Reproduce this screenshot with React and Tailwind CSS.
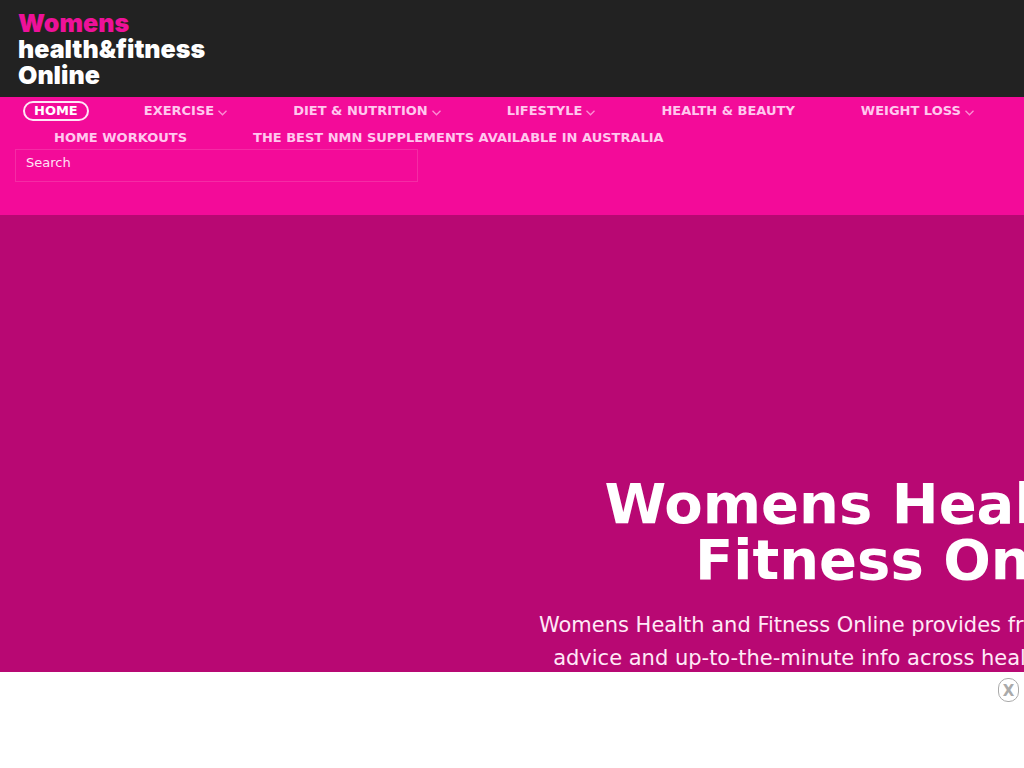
import React from 'react';
import { clsx } from 'clsx';

const menu = [
    { label: 'HOME', active: true },
    { label: 'EXERCISE', dropdown: true },
    { label: 'DIET & NUTRITION', dropdown: true },
    { label: 'LIFESTYLE', dropdown: true },
    { label: 'HEALTH & BEAUTY' },
    { label: 'WEIGHT LOSS', dropdown: true },
    { label: 'HOME WORKOUTS' },
    { label: 'THE BEST NMN SUPPLEMENTS AVAILABLE IN AUSTRALIA' },
];

const Chevron = () => (
    <svg className="mt-[3px] ml-1 h-[6px] w-[9px] opacity-70" viewBox="0 0 9 6" fill="none" stroke="currentColor" strokeWidth="1.3">
        <path d="M0.5 0.8 L4.5 4.8 L8.5 0.8" />
    </svg>
);

const App = () => {
    return (
        <div className="flex h-screen flex-col overflow-hidden font-['DejaVu_Sans',sans-serif]">
            <header>
                <div className="bg-[#222222] px-[18px] pt-[10px] pb-[9px]">
                    <a href="#" className="inline-block align-top font-['Inter',sans-serif] text-[25px] leading-[26px] font-black text-white">
                        <span className="block text-[#ee1199]">Womens</span>
                        <span className="block">health&amp;fitness</span>
                        <span className="block">Online</span>
                    </a>
                </div>

                <div className="bg-[#f30b99] pt-1 pb-[33px]">
                    <nav className="flex flex-wrap gap-x-[66px] gap-y-[7px] pr-4 pl-[54px] text-[13px] leading-5 font-bold text-[#ffc8ee]">
                        {menu.map((item) => (
                            <a
                                key={item.label}
                                href="#"
                                className={clsx(
                                    'flex h-5 items-center whitespace-nowrap',
                                    item.active && '-mr-[11px] -ml-[31px] rounded-full border-2 border-[#ffe6f6] px-[9px] text-white'
                                )}
                            >
                                {item.label}
                                {item.dropdown && <Chevron />}
                            </a>
                        ))}
                    </nav>

                    <form className="mt-px px-[15px]">
                        <input
                            type="search"
                            aria-label="Search"
                            placeholder="Search"
                            className="block h-[33px] w-[403px] max-w-full border border-[#f52ba5] bg-transparent px-[10px] pb-[7px] text-[13px] text-white placeholder:text-[#ffe2f5] placeholder:opacity-100"
                        />
                    </form>
                </div>
            </header>

            <main className="flex-1 overflow-hidden bg-[#b80873] pt-[261px]">
                <div className="ml-[50%] w-[818px] text-center text-white">
                    <h1 className="text-[56px] leading-[56px] font-bold">
                        Womens Health and
                        <br />
                        Fitness Online
                    </h1>
                    <p className="mt-[21px] text-[21px] leading-[33px] whitespace-nowrap text-[#ffe9f7]">
                        Womens Health and Fitness Online provides free expert fitness tips, with
                        <br />
                        advice and up-to-the-minute info across health, beauty and workouts.
                    </p>
                </div>
            </main>

            <aside className="flex h-24 shrink-0 items-start justify-end bg-white px-[5px] pt-[6px]">
                <button
                    type="button"
                    aria-label="Close"
                    className="flex h-6 w-[21px] items-center justify-center rounded-[10px] border border-[#aaaaaa] pt-[2px] text-[15px] leading-5 font-bold text-[#aaaaaa]"
                >
                    X
                </button>
            </aside>
        </div>
    );
};

export default App;
